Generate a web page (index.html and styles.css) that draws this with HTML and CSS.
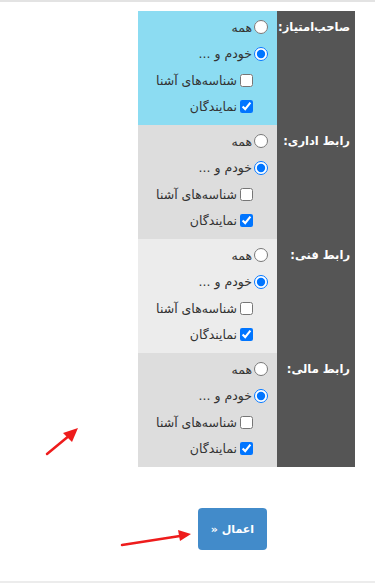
FILE: index.html
```html
<!DOCTYPE html>
<html lang="fa">
<head>
<meta charset="utf-8">
<link rel="stylesheet" href="styles.css">
</head>
<body>
<div class="topline"></div>
<div class="perm" dir="rtl">
  <div class="row row-blue">
    <div class="lbl">صاحب‌امتیاز:</div>
    <div class="opts">
      <label class="opt"><input type="radio" name="r1">همه</label>
      <label class="opt"><input type="radio" name="r1" checked>خودم و ...</label>
      <label class="opt sub"><input type="checkbox">شناسه‌های آشنا</label>
      <label class="opt sub"><input type="checkbox" checked>نمایندگان</label>
    </div>
  </div>
  <div class="row row-gray">
    <div class="lbl">رابط اداری:</div>
    <div class="opts">
      <label class="opt"><input type="radio" name="r2">همه</label>
      <label class="opt"><input type="radio" name="r2" checked>خودم و ...</label>
      <label class="opt sub"><input type="checkbox">شناسه‌های آشنا</label>
      <label class="opt sub"><input type="checkbox" checked>نمایندگان</label>
    </div>
  </div>
  <div class="row row-light">
    <div class="lbl">رابط فنی:</div>
    <div class="opts">
      <label class="opt"><input type="radio" name="r3">همه</label>
      <label class="opt"><input type="radio" name="r3" checked>خودم و ...</label>
      <label class="opt sub"><input type="checkbox">شناسه‌های آشنا</label>
      <label class="opt sub"><input type="checkbox" checked>نمایندگان</label>
    </div>
  </div>
  <div class="row row-gray">
    <div class="lbl">رابط مالی:</div>
    <div class="opts">
      <label class="opt"><input type="radio" name="r4">همه</label>
      <label class="opt"><input type="radio" name="r4" checked>خودم و ...</label>
      <label class="opt sub"><input type="checkbox">شناسه‌های آشنا</label>
      <label class="opt sub"><input type="checkbox" checked>نمایندگان</label>
    </div>
  </div>
</div>
<div class="actions">
  <button class="btn" type="button" dir="rtl">اعمال «</button>
</div>
<div class="bottomline"></div>
<svg class="arrows" width="375" height="586" viewBox="0 0 375 586">
  <line x1="47" y1="454" x2="70" y2="435" stroke="#ee1c1c" stroke-width="2.5" stroke-linecap="round"/>
  <polygon points="78,428 63,433 72,442" fill="#ee1c1c"/>
  <line x1="122" y1="545" x2="180" y2="536" stroke="#ee1c1c" stroke-width="2.5" stroke-linecap="round"/>
  <polygon points="191,534 178,530 180,541" fill="#ee1c1c"/>
</svg>
</body>
</html>
```
FILE: styles.css
```css
html, body {
  margin: 0;
  padding: 0;
  background: #fff;
}
body {
  position: relative;
  width: 375px;
  height: 586px;
  overflow: hidden;
  font-family: "DejaVu Sans", "Noto Sans", sans-serif;
  color: #333;
}
.topline {
  height: 2px;
  background: #e3e3e3;
}
.perm {
  width: 217px;
  margin: 9px 20px 0 auto;
}
.row {
  display: flex;
  height: 114px;
}
.row-blue .opts { background: #8cdcf2; }
.row-gray .opts { background: #dddddd; }
.row-light .opts { background: #ececec; }
.lbl {
  width: 78px;
  flex: none;
  box-sizing: border-box;
  background: #555555;
  color: #fff;
  font-weight: bold;
  font-size: 11.5px;
  line-height: 26px;
  padding: 3px 5px 0 0;
  white-space: nowrap;
}
.opts {
  flex: 1;
  box-sizing: border-box;
  padding: 3px 9px 0 0;
  display: flex;
  flex-direction: column;
}
.opt {
  display: flex;
  align-items: center;
  height: 26.5px;
  font-size: 12.5px;
  white-space: nowrap;
}
.opt input {
  margin: 0 0 0 2px;
  width: 14px;
  height: 14px;
}
.opt.sub {
  padding-right: 15px;
}
.opt.sub input {
  width: 13px;
  height: 13px;
  margin-left: 3px;
}
.actions {
  display: flex;
  justify-content: flex-end;
  padding: 41px 108px 0 0;
}
.btn {
  width: 69px;
  height: 42px;
  border: none;
  border-radius: 4px;
  background: #428bca;
  color: #fff;
  font-family: "DejaVu Sans", sans-serif;
  font-weight: bold;
  font-size: 11px;
  padding: 0;
}
.bottomline {
  position: absolute;
  left: 0;
  right: 0;
  top: 581px;
  height: 2px;
  background: #ececec;
}
.arrows {
  position: absolute;
  left: 0;
  top: 0;
  pointer-events: none;
}
```
